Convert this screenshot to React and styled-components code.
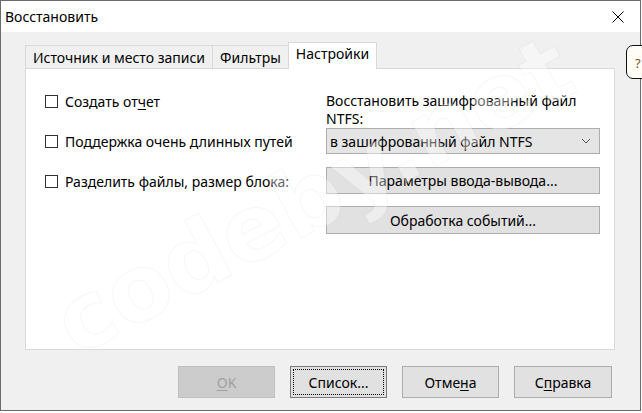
import styled, { createGlobalStyle } from "styled-components";

const GlobalStyle = createGlobalStyle`
  html, body {
    margin: 0;
    padding: 0;
    background: #ffffff;
  }
  body {
    font-family: "Noto Sans", "Open Sans", sans-serif;
    font-size: 14px;
    color: #000;
  }
`

const Screen = styled.div`
  position: relative;
  width: 642px;
  height: 413px;
  overflow: hidden;
  background: #ffffff;
`

const Window = styled.div`
  width: 641px;
  height: 411px;
  box-sizing: border-box;
  border: 1px solid #6b6b6b;
  display: flex;
  flex-direction: column;
  background: #f0f0f0;
`

const TitleBar = styled.div`
  height: 31px;
  flex-shrink: 0;
  background: #ffffff;
  display: flex;
  align-items: center;
  justify-content: space-between;
  padding: 0 4px 0 4px;
`

const Title = styled.span`
  font-size: 14px;
  padding-bottom: 1px;
`

const CloseButton = styled.div`
  width: 40px;
  height: 30px;
  display: flex;
  align-items: center;
  justify-content: center;
  margin-right: -2px;
`

const Body = styled.div`
  flex: 1;
  padding: 10px 0 0 24px;
  display: flex;
  flex-direction: column;
`

const TabRow = styled.div`
  display: flex;
  align-items: flex-end;
  height: 27px;
  position: relative;
  z-index: 1;
`

const Tab = styled.div`
  box-sizing: border-box;
  height: ${p => (p.$active ? "27px" : "24px")};
  padding: 0 7px;
  margin-left: ${p => (p.$first ? "0" : "-1px")};
  background: ${p => (p.$active ? "#ffffff" : "#f0f0f0")};
  border: 1px solid #d9d9d9;
  border-bottom: ${p => (p.$active ? "none" : "1px solid #d9d9d9")};
  display: flex;
  align-items: center;
  font-size: 14px;
  line-height: 1;
  padding-top: ${p => (p.$active ? "0" : "1px")};
  padding-bottom: ${p => (p.$active ? "4px" : "0")};
  white-space: nowrap;
`

const Panel = styled.div`
  width: 590px;
  height: 282px;
  box-sizing: border-box;
  margin-top: -1px;
  background: #ffffff;
  border: 1px solid #d9d9d9;
  padding: 19px 0 0 19px;
  display: grid;
  grid-template-columns: 281px 274px;
  align-items: start;
`

const LeftColumn = styled.div`
  display: flex;
  flex-direction: column;
  gap: 14px;
`

const CheckRow = styled.label`
  height: 26px;
  display: flex;
  align-items: center;
  gap: 7px;
  white-space: nowrap;
`

const Box = styled.span`
  width: 13px;
  height: 13px;
  box-sizing: border-box;
  border: 1px solid #333333;
  background: #ffffff;
  flex-shrink: 0;
`

const RightColumn = styled.div`
  display: flex;
  flex-direction: column;
  padding-top: 4px;
`

const FieldLabel = styled.div`
  line-height: 18px;
  width: 272px;
`

const Select = styled.div`
  height: 26px;
  box-sizing: border-box;
  background: #e5e5e5;
  border: 1px solid #adadad;
  display: flex;
  align-items: center;
  justify-content: space-between;
  padding: 0 8px 0 3px;
  margin-bottom: 13px;
`

const PanelButton = styled.div`
  height: ${p => p.$h || 27}px;
  box-sizing: border-box;
  background: #e1e1e1;
  border: 1px solid #adadad;
  display: flex;
  align-items: center;
  justify-content: center;
  margin-bottom: 12px;
`

const Footer = styled.div`
  display: flex;
  gap: 15px;
  padding: 16px 0 0 153px;
`

const DialogButton = styled.div`
  width: ${p => p.$w || 97}px;
  height: 32px;
  box-sizing: border-box;
  background: ${p => (p.$disabled ? "#cccccc" : "#e1e1e1")};
  border: 1px solid ${p => (p.$disabled ? "#bfbfbf" : p.$focus ? "#7a7a7a" : "#adadad")};
  color: ${p => (p.$disabled ? "#a0a0a0" : "#000")};
  display: flex;
  align-items: center;
  justify-content: center;
  position: relative;
  &::after {
    content: "";
    display: ${p => (p.$focus ? "block" : "none")};
    position: absolute;
    inset: 2px;
    border: 1px dotted #000;
  }
`

const Key = styled.span`
  text-decoration: underline;
  text-underline-offset: 2px;
`

const HelpTip = styled.div`
  position: absolute;
  left: 626px;
  top: 45px;
  width: 30px;
  height: 34px;
  box-sizing: border-box;
  border: 1px solid #111;
  border-radius: 7px 0 0 7px;
  background: #fffdf6;
  font-size: 13px;
  color: #6b5a20;
  padding: 8px 0 0 8px;
`

const Watermark = styled.div`
  position: absolute;
  left: 62px;
  top: 280px;
  line-height: 100px;
  font-family: "DejaVu Sans", sans-serif;
  font-weight: 700;
  font-size: 92px;
  color: rgba(255, 255, 255, 0.4);
  -webkit-text-stroke: 1px rgba(0, 0, 0, 0.04);
  transform: rotate(-28deg);
  transform-origin: left center;
  pointer-events: none;
  white-space: nowrap;
`

const Chevron = () => (
  <svg width="10" height="6" viewBox="0 0 10 6">
    <path d="M1 1 L5 5 L9 1" fill="none" stroke="#555" strokeWidth="1" />
  </svg>
)

const CloseIcon = () => (
  <svg width="12" height="12" viewBox="0 0 12 12">
    <path d="M0.5 0.5 L11.5 11.5 M11.5 0.5 L0.5 11.5" stroke="#000" strokeWidth="1" />
  </svg>
)

const Checkbox = ({ children }) => (
  <CheckRow>
    <Box />
    <span>{children}</span>
  </CheckRow>
)

const App = () => {
  return (
    <Screen>
      <GlobalStyle />
      <Window>
        <TitleBar>
          <Title>Восстановить</Title>
          <CloseButton>
            <CloseIcon />
          </CloseButton>
        </TitleBar>
        <Body>
          <TabRow>
            <Tab $first>Источник и место записи</Tab>
            <Tab>Фильтры</Tab>
            <Tab $active>Настройки</Tab>
          </TabRow>
          <Panel>
            <LeftColumn>
              <Checkbox>
                Создать от<Key>ч</Key>ет
              </Checkbox>
              <Checkbox>Поддержка очень длинных путей</Checkbox>
              <Checkbox>Разделить файлы, размер блока:</Checkbox>
            </LeftColumn>
            <RightColumn>
              <FieldLabel>Восстановить зашифрованный файл NTFS:</FieldLabel>
              <Select>
                <span>в зашифрованный файл NTFS</span>
                <Chevron />
              </Select>
              <PanelButton>Параметры ввода-вывода...</PanelButton>
              <PanelButton $h={28}>Обработка событий...</PanelButton>
            </RightColumn>
          </Panel>
          <Footer>
            <DialogButton $disabled>
              <Key>O</Key>K
            </DialogButton>
            <DialogButton $focus>Список...</DialogButton>
            <DialogButton>
              Отме<Key>н</Key>а
            </DialogButton>
            <DialogButton $w={98}>
              С<Key>п</Key>равка
            </DialogButton>
          </Footer>
        </Body>
      </Window>
      <HelpTip>?</HelpTip>
      <Watermark>codeby.net</Watermark>
    </Screen>
  )
}

export default App
